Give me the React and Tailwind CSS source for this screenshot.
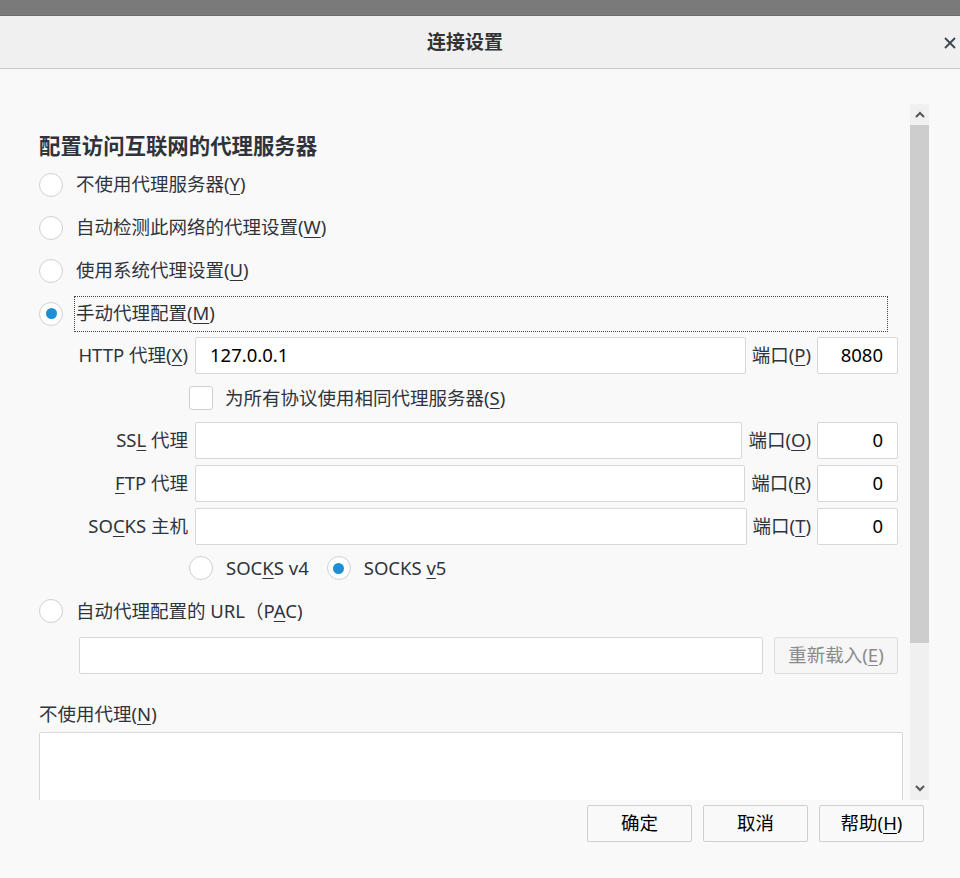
import React from "react";

const FONT = "[font-family:'Noto_Sans','Noto_Sans_CJK_SC',sans-serif]";

function U({ children }) {
  return <span className="underline decoration-1 underline-offset-[3px]">{children}</span>;
}

function Radio({ on }) {
  return (
    <span className="w-6 h-6 shrink-0 rounded-full border border-[#d0d0d0] bg-white flex items-center justify-center">
      {on && <span className="w-[11px] h-[11px] rounded-full bg-[#1e8fd6]" />}
    </span>
  );
}

function Box({ value, cls }) {
  return (
    <div className={"h-[37px] bg-white border border-[#d7d7db] rounded-[2px] flex items-center text-[18.5px] text-black " + cls}>
      {value}
    </div>
  );
}

function ProxyRow({ label, value, k, port }) {
  return (
    <div className="flex items-center h-[37px] pr-[5px]">
      <div className="w-[149px] text-right whitespace-nowrap">{label}</div>
      <Box cls="ml-[7px] flex-1 px-[14px]" value={value} />
      <div className="ml-[6px] whitespace-nowrap">
        端口(<U>{k}</U>)
      </div>
      <Box cls="ml-[6px] w-[81px] justify-end pr-[14px]" value={port} />
    </div>
  );
}

function Option({ on, children }) {
  return (
    <div className="flex items-center h-[43px]">
      <Radio on={on} />
      <span className="ml-[13px]">{children}</span>
    </div>
  );
}

function Btn({ children }) {
  return (
    <div className="w-[105px] h-[37px] border border-[#cfcfcf] rounded-[2px] bg-[#f9f9fa] flex items-center justify-center text-[18.5px] text-black">
      {children}
    </div>
  );
}

export default function App() {
  return (
    <div className={"w-[960px] h-[878px] bg-[#f9f9fa] flex flex-col text-[18.5px] text-[#2f343a] leading-none " + FONT}>
      <div className="h-[16px] bg-[#7a7a7a] border-b border-[#6c6c6c]" />
      <div className="relative h-[53px] bg-[#f0f0f0] border-b border-[#c8c8c8] flex items-center justify-center pr-[30px]">
        <span className="text-[19px] font-bold text-[#333]">连接设置</span>
        <svg className="absolute right-[4px] top-[21px]" width="12" height="12" viewBox="0 0 12 12">
          <path d="M1 1L11 11M11 1L1 11" stroke="#3b4550" strokeWidth="1.8" />
        </svg>
      </div>

      <div className="h-[35px]" />
      <div className="flex h-[696px]">
        <div className="w-[910px] pl-[39px] pr-[7px] overflow-hidden">
          <div className="mt-[28px] h-[28px] flex items-center text-[21.4px] font-bold">配置访问互联网的代理服务器</div>
          <div className="mt-[3px]">
            <Option>不使用代理服务器(<U>Y</U>)</Option>
            <Option>自动检测此网络的代理设置(<U>W</U>)</Option>
            <Option>使用系统代理设置(<U>U</U>)</Option>
            <div className="flex items-center h-[43px]">
              <Radio on />
              <div className="ml-[11px] mr-[15px] flex-1 h-[36px] border border-dotted border-[#444] flex items-center pl-[1px]">
                手动代理配置(<U>M</U>)
              </div>
            </div>
          </div>

          <div className="mt-[2px]">
            <ProxyRow label={<>HTTP 代理(<U>X</U>)</>} value="127.0.0.1" k="P" port="8080" />
          </div>
          <div className="h-[48px] flex items-center pl-[150px]">
            <span className="w-6 h-6 rounded-[3px] border border-[#d0d0d0] bg-white" />
            <span className="ml-[12px]">为所有协议使用相同代理服务器(<U>S</U>)</span>
          </div>
          <ProxyRow label={<>SS<U>L</U> 代理</>} value="" k="O" port="0" />
          <div className="mt-[6px]">
            <ProxyRow label={<><U>F</U>TP 代理</>} value="" k="R" port="0" />
          </div>
          <div className="mt-[6px]">
            <ProxyRow label={<>SO<U>C</U>KS 主机</>} value="" k="T" port="0" />
          </div>

          <div className="h-[46px] flex items-center pl-[150px]">
            <Radio />
            <span className="ml-[13px]">
              SOC<U>K</U>S v4
            </span>
            <span className="ml-[18px] flex items-center">
              <Radio on />
              <span className="ml-[13px]">
                SOCKS <U>v</U>5
              </span>
            </span>
          </div>

          <div className="h-[40px] flex items-center">
            <Radio />
            <span className="ml-[13px]">
              自动代理配置的 URL（P<U>A</U>C)
            </span>
          </div>
          <div className="mt-[6px] flex items-center pl-[40px] pr-[5px]">
            <Box cls="flex-1 bg-[#fcfcfc]" value="" />
            <div className="ml-[11px] w-[124px] h-[37px] border border-[#dedede] rounded-[2px] bg-[#f6f6f6] flex items-center justify-center text-[#8a8a8a]">
              重新载入(<U>E</U>)
            </div>
          </div>

          <div className="mt-[22px] h-[36px] flex items-center">
            不使用代理(<U>N</U>)
          </div>
          <div className="h-[150px] bg-white border border-[#d7d7db] rounded-[2px]" />
        </div>

        <div className="w-[19px] bg-[#f0f0f0] flex flex-col">
          <div className="h-[21px] flex items-center justify-center">
            <svg width="10" height="7" viewBox="0 0 10 7">
              <path d="M1 6L5 2L9 6" stroke="#555" strokeWidth="2" fill="none" />
            </svg>
          </div>
          <div className="h-[518px] bg-[#cdcdcd]" />
          <div className="flex-1" />
          <div className="h-[24px] flex items-center justify-center">
            <svg width="10" height="7" viewBox="0 0 10 7">
              <path d="M1 1L5 5L9 1" stroke="#555" strokeWidth="2" fill="none" />
            </svg>
          </div>
        </div>
      </div>

      <div className="flex-1 flex justify-end items-start pt-[5px] pr-[36px] gap-[11px]">
        <Btn>确定</Btn>
        <Btn>取消</Btn>
        <Btn>
          帮助(<U>H</U>)
        </Btn>
      </div>
    </div>
  );
}
